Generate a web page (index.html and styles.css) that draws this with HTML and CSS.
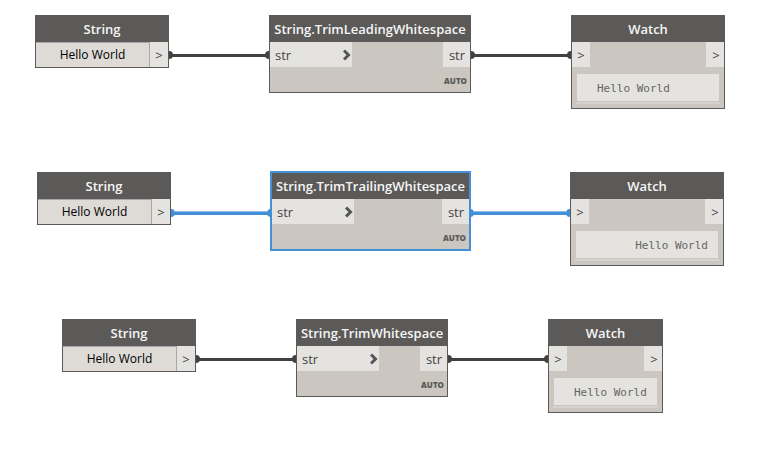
FILE: index.html
```html
<!DOCTYPE html>
<html lang="en">
<head>
<meta charset="utf-8">
<title>String nodes</title>
<link rel="stylesheet" href="styles.css">
</head>
<body>
<main class="canvas">
  <svg class="wires" aria-hidden="true">
    <g class="wire">
      <path d="M169 55.500H269M471 55.500H571"/>
      <circle cx="169" cy="55" r="4"/><circle cx="269" cy="55" r="4"/>
      <circle cx="471" cy="55" r="4"/><circle cx="571" cy="55" r="4"/>
    </g>
    <g class="wire wire-selected">
      <path d="M171 213.500H271M470 213.500H570"/>
      <path class="glow" d="M175 211.500H267M474 211.500H566"/>
      <circle cx="171" cy="213" r="4"/><circle cx="271" cy="213" r="4"/>
      <circle cx="470" cy="213" r="4"/><circle cx="570" cy="213" r="4"/>
    </g>
    <g class="wire">
      <path d="M196 359.500H296M448 359.500H548"/>
      <circle cx="196" cy="359" r="4"/><circle cx="296" cy="359" r="4"/>
      <circle cx="448" cy="359" r="4"/><circle cx="548" cy="359" r="4"/>
    </g>
  </svg>

  <section class="node string a-string">
    <label class="title" for="text-a">String</label>
    <div class="ports"><input class="value" id="text-a" type="text" value="Hello World"><button class="port" type="button">&gt;</button></div>
  </section>
  <section class="node a-trim">
    <h2 class="title">String.TrimLeadingWhitespace</h2>
    <div class="ports">
      <button class="port port-in" type="button">str<svg class="chevron" viewBox="0 0 8 12"><path d="M1 1.500L5.500 6L1 10.500"/></svg></button>
      <button class="port port-out" type="button">str</button>
    </div>
    <div class="lacing">AUTO</div>
  </section>
  <section class="node a-watch">
    <h2 class="title">Watch</h2>
    <div class="ports"><button class="port" type="button">&gt;</button><button class="port port-end" type="button">&gt;</button></div>
    <div class="watch"><output class="result">Hello World</output></div>
  </section>

  <section class="node string b-string">
    <label class="title" for="text-b">String</label>
    <div class="ports"><input class="value" id="text-b" type="text" value="Hello World"><button class="port" type="button">&gt;</button></div>
  </section>
  <section class="node selected b-trim">
    <h2 class="title">String.TrimTrailingWhitespace</h2>
    <div class="ports">
      <button class="port port-in" type="button">str<svg class="chevron" viewBox="0 0 8 12"><path d="M1 1.500L5.500 6L1 10.500"/></svg></button>
      <button class="port port-out" type="button">str</button>
    </div>
    <div class="lacing">AUTO</div>
  </section>
  <section class="node b-watch">
    <h2 class="title">Watch</h2>
    <div class="ports"><button class="port" type="button">&gt;</button><button class="port port-end" type="button">&gt;</button></div>
    <div class="watch"><output class="result result-end">Hello World</output></div>
  </section>

  <section class="node string c-string">
    <label class="title" for="text-c">String</label>
    <div class="ports"><input class="value" id="text-c" type="text" value="Hello World"><button class="port" type="button">&gt;</button></div>
  </section>
  <section class="node c-trim">
    <h2 class="title">String.TrimWhitespace</h2>
    <div class="ports">
      <button class="port port-in" type="button">str<svg class="chevron" viewBox="0 0 8 12"><path d="M1 1.500L5.500 6L1 10.500"/></svg></button>
      <button class="port port-out" type="button">str</button>
    </div>
    <div class="lacing">AUTO</div>
  </section>
  <section class="node c-watch">
    <h2 class="title">Watch</h2>
    <div class="ports"><button class="port" type="button">&gt;</button><button class="port port-end" type="button">&gt;</button></div>
    <div class="watch"><output class="result">Hello World</output></div>
  </section>
</main>
</body>
</html>
```

FILE: styles.css
```css
* {
  box-sizing: border-box;
}

body {
  margin: 0;
  background: #fff;
  font-family: "Open Sans", "Noto Sans", sans-serif;
}

.canvas {
  position: relative;
  min-height: 100vh;
  overflow: hidden;
}

.wires {
  position: absolute;
  inset: 0;
  width: 100%;
  height: 100%;
}

.wire {
  fill: #424242;
  stroke: none;
}

.wire path {
  stroke: #424242;
  stroke-width: 3;
}

.wire-selected {
  fill: #4390d8;
}

.wire-selected path {
  stroke: #4390d8;
}

.wire-selected .glow {
  stroke: #8dbbe7;
  stroke-width: 1;
}

/* Nodes are placed freely on the canvas */
.node {
  position: absolute;
  border: 1px solid #5b5a58;
  background: #cbc6bf;
}

.selected {
  border: 2px solid #4390d8;
}

.a-string { left: 35px; top: 15px; width: 134px; }
.a-trim { left: 269px; top: 15px; width: 202px; }
.a-watch { left: 571px; top: 15px; width: 154px; }
.b-string { left: 37px; top: 172px; width: 134px; }
.b-trim { left: 270px; top: 171px; width: 201px; }
.b-watch { left: 570px; top: 172px; width: 154px; }
.c-string { left: 62px; top: 319px; width: 134px; }
.c-trim { left: 296px; top: 319px; width: 152px; }
.c-watch { left: 548px; top: 319px; width: 115px; }

.title {
  display: flex;
  justify-content: center;
  margin: 0;
  background: #5b5a58;
  color: #f5f5f5;
  font-size: 13px;
  font-weight: 600;
  line-height: 26px;
  white-space: nowrap;
}

.ports {
  display: flex;
  justify-content: space-between;
  height: 25px;
}

.port {
  display: flex;
  align-items: center;
  justify-content: center;
  width: 18px;
  margin: 0;
  padding: 0;
  border: 0;
  background: #e4e3df;
  color: #444;
  font: 13px/18px "Open Sans", "Noto Sans", sans-serif;
}

.port-in {
  justify-content: space-between;
  width: 82px;
  padding: 0 1px 0 5px;
}

.port-out {
  width: 27px;
  padding-left: 1px;
}

.port-end {
  padding-left: 2px;
}

.chevron {
  width: 8px;
  height: 12px;
  fill: none;
  stroke: #555;
  stroke-width: 3;
}

.value {
  flex: 1;
  min-width: 0;
  margin: 0;
  padding: 0;
  border: 0 solid #a9a9ad;
  border-width: 1px 1px 0 0;
  border-radius: 0;
  background: #dedbd6;
  color: #000;
  font: 12px/18px "Open Sans", "Noto Sans", sans-serif;
  text-align: center;
}

.lacing {
  padding: 2px 3px 0;
  color: #5b5a58;
  font-size: 8px;
  font-weight: 800;
  line-height: 23px;
  text-align: right;
}

.watch {
  margin: 7px 4px 4px;
  padding: 0 1px 1px;
  border-bottom: 2px solid #d3d3d3;
}

.result {
  display: block;
  padding: 2px 20px 0;
  overflow: hidden;
  background: #e4e3df;
  color: #666563;
  font: 11px/25px "DejaVu Sans Mono", monospace;
  white-space: nowrap;
}

.result-end {
  padding: 2px 10px 0;
  text-align: right;
}
```
